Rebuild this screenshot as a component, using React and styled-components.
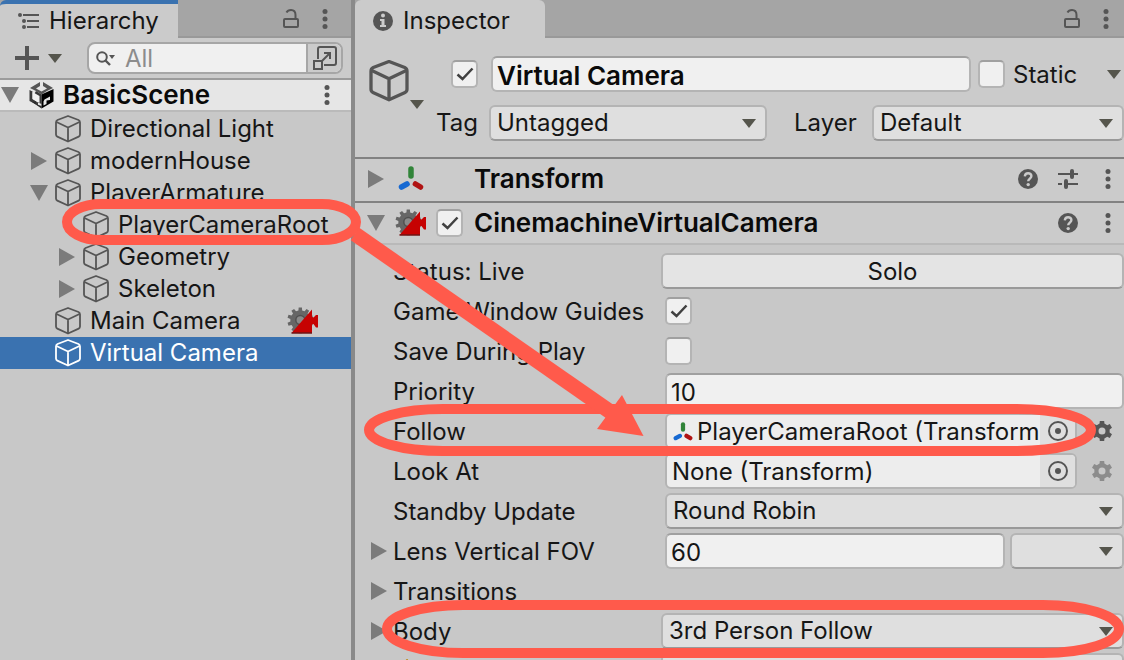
import React from "react";
import styled, { createGlobalStyle, css } from "styled-components";

const GlobalStyle = createGlobalStyle`
  *, *::before, *::after { box-sizing: border-box; }
  body {
    margin: 0;
    overflow: hidden;
    background: #c8c8c8;
    color: #161616;
    font-family: Inter, "Liberation Sans", sans-serif;
    font-size: 24px;
    line-height: 32px;
    font-optical-sizing: none;
  }
  button, input, select { font: inherit; color: inherit; }
  button { padding: 0; border: 0; background: none; cursor: pointer; }
  h1, h2, ul { margin: 0; padding: 0; font-size: inherit; font-weight: inherit; }
  svg { display: block; }
`;

/* ---------- icons ---------- */

const INK = "#555555";

function gearPath(cx, cy, outer, inner, teeth) {
  const step = (Math.PI * 2) / teeth;
  const points = [];
  for (let i = 0; i < teeth; i += 1) {
    const a = i * step - Math.PI / 2;
    [
      [-0.3, inner],
      [-0.2, outer],
      [0.2, outer],
      [0.3, inner],
    ].forEach(([offset, r]) => {
      const angle = a + offset * step;
      points.push(`${(cx + r * Math.cos(angle)).toFixed(2)} ${(cy + r * Math.sin(angle)).toFixed(2)}`);
    });
  }
  return `M${points.join("L")}Z`;
}

const TriangleRight = () => (
  <svg width="16" height="18" viewBox="0 0 16 18"><path d="M0 0L16 9L0 18Z" fill="#7b7b7b" /></svg>
);
const TriangleDown = () => (
  <svg width="18" height="16" viewBox="0 0 18 16"><path d="M0 0H18L9 16Z" fill="#7b7b7b" /></svg>
);
const Caret = () => (
  <svg width="14" height="9" viewBox="0 0 14 9"><path d="M0 0H14L7 9Z" fill="#55554c" /></svg>
);
const Dots = () => (
  <svg width="6" height="20" viewBox="0 0 6 20" fill={INK}>
    <circle cx="3" cy="2.5" r="2.5" /><circle cx="3" cy="10" r="2.5" /><circle cx="3" cy="17.5" r="2.5" />
  </svg>
);
const Lock = () => (
  <svg width="18" height="22" viewBox="0 0 18 22" fill="none" stroke={INK} strokeWidth="2">
    <rect x="2" y="11" width="14" height="8" rx="1" />
    <path d="M4.500 4.500C5.500 2.500 7 2 9 2C12 2 13.500 4 13.500 7V11" />
  </svg>
);
const ListIcon = () => (
  <svg width="22" height="18" viewBox="0 0 22 18" fill={INK}>
    <circle cx="2" cy="3" r="2" /><circle cx="6" cy="9" r="2" /><circle cx="6" cy="15" r="2" />
    <path d="M5 2H21V4H5ZM9 8H21V10H9ZM9 14H21V16H9Z" />
  </svg>
);
const InfoIcon = () => (
  <svg width="20" height="20" viewBox="0 0 20 20">
    <circle cx="10" cy="10" r="10" fill={INK} />
    <circle cx="10" cy="4.500" r="2" fill="#cbcbcb" />
    <path d="M7 8H11.500V14H13V16H7V14H8.500V10H7Z" fill="#cbcbcb" />
  </svg>
);
const HelpIcon = () => (
  <svg width="20" height="20" viewBox="0 0 20 20">
    <circle cx="10" cy="10" r="10" fill={INK} />
    <path d="M6.800 7.400C7 5.200 8.300 4.200 10.100 4.200C12 4.200 13.400 5.400 13.400 7.100C13.400 9.600 10.200 9.600 10.200 12.300" fill="none" stroke="#cbcbcb" strokeWidth="2.400" />
    <circle cx="10.200" cy="15.600" r="1.700" fill="#cbcbcb" />
  </svg>
);
const SlidersIcon = () => (
  <svg width="20" height="20" viewBox="0 0 20 20" fill={INK}>
    <path d="M0 4H12V6H0ZM16 4H20V6H16ZM0 14H4V16H0ZM10 14H20V16H10Z" />
    <rect x="12" y="0" width="4" height="10" rx="2" /><rect x="6" y="10" width="4" height="10" rx="2" />
  </svg>
);
const Cube = ({ size = 28, color = INK, weight = 1.8 }) => (
  <svg width={size} height={size} viewBox="0 0 28 28" fill="none" stroke={color} strokeWidth={weight} strokeLinejoin="round">
    <path d="M14 1L24.500 5Q26 5.700 26 7.500V19.500Q26 21 24.700 21.600L14 26.500L3.300 21.600Q2 21 2 19.500V7.500Q2 5.700 3.500 5Z" />
    <path d="M2.500 7L14 12.500L25.500 7M14 12.500V26.500" />
  </svg>
);
const UnityLogo = () => (
  <svg width="25" height="28" viewBox="0 0 25 28">
    <path d="M11 1L1 7L7 10L12.500 13.500L18 10L24 7L14 1V5L18 7.500L12.500 10.500L7 7.500L11 5Z" fill="#555555" />
    <path d="M0.500 9L3.500 10.500V18L9 21.500V16L5 13.500L7 10L12.500 13.500V23L9 21.500V24.500L0.500 20Z" fill="#3a3a3a" />
    <path d="M3.500 11L10.500 15V22L3.500 18Z" fill="#f2f2f2" />
    <path d="M3 21L7 20.500V23L12.500 25V27.500Z" fill="#2b2b2b" />
    <path d="M12.500 13.500L24.500 8V20.500L12.500 27.500Z" fill="#000000" />
    <path d="M14.500 20.500L15.500 18.500L21 15.500V19L17.500 19.500V23L14.500 24.500Z" fill="#e6e6e6" />
  </svg>
);
const AxesIcon = ({ size = 26 }) => (
  <svg width={size} height={size} viewBox="0 0 26 26" fill="none" strokeWidth="5.500" strokeLinecap="round">
    <path d="M13 3V10" stroke="#318439" />
    <path d="M3.500 21L9 18" stroke="#1769d2" />
    <path d="M17.500 18L22.500 21" stroke="#b01313" />
  </svg>
);
const CinemachineIcon = () => (
  <svg width="32" height="28" viewBox="0 0 32 28">
    <path d={gearPath(13.3, 13.3, 13, 10, 10)} fill="#666666" />
    <circle cx="13.300" cy="13" r="4.500" fill="#8a8a8a" stroke="#505050" strokeWidth="1.500" />
    <path d="M4.500 26L25 2.500V10L26.500 10.500L29 8H31V20.500H29L26.500 17L25 17.500V26Z" fill="#c60202" />
    <path d="M4.500 26H25" stroke="#6f1515" strokeWidth="1.500" />
  </svg>
);
const SettingsGear = ({ color = INK }) => (
  <svg width="20" height="20" viewBox="0 0 20 20">
    <path fillRule="evenodd" fill={color} d={`${gearPath(10, 10, 10.5, 7.8, 6)}M10 6.500A3.500 3.500 0 1 0 10 13.500A3.500 3.500 0 1 0 10 6.500Z`} />
  </svg>
);
const TargetIcon = () => (
  <svg width="20" height="20" viewBox="0 0 20 20">
    <circle cx="10" cy="10" r="9" fill="none" stroke={INK} strokeWidth="2" /><circle cx="10" cy="10" r="3" fill={INK} />
  </svg>
);
const SearchIcon = () => (
  <svg width="19" height="15" viewBox="0 0 19 15">
    <circle cx="6" cy="6" r="4.800" fill="none" stroke={INK} strokeWidth="2" />
    <path d="M9 9L14 14" stroke={INK} strokeWidth="2.400" /><path d="M13 4H19L16 8Z" fill={INK} />
  </svg>
);
const OpenWindowIcon = () => (
  <svg width="24" height="24" viewBox="0 0 24 24" fill="none" stroke={INK} strokeWidth="2">
    <path d="M5 13V3Q5 1 7 1H21Q23 1 23 3V17Q23 19 21 19H11" />
    <rect x="1" y="15" width="8" height="8" /><path d="M9 15L17 7M11 7H17V13" />
  </svg>
);
const PlusIcon = () => (
  <svg width="24" height="24" viewBox="0 0 24 24"><path d="M10 0H14V10H24V14H14V24H10V14H0V10H10Z" fill={INK} /></svg>
);
const WarningIcon = () => (
  <svg width="28" height="28" viewBox="0 0 28 28">
    <path d="M14 2L26 25H2Z" fill="#f5c32c" stroke="#c08a14" strokeWidth="2" strokeLinejoin="round" />
    <path d="M14 10V18M14 20V22" stroke="#333333" strokeWidth="2" />
  </svg>
);

/* ---------- panels ---------- */

const Editor = styled.div`
  position: relative;
  display: flex;
  height: 100vh;
  overflow: hidden;
`;
const HierarchyPanel = styled.section`
  flex: 0 0 351px;
  min-width: 0;
  background: #c8c8c8;
`;
const InspectorPanel = styled.section`
  flex: 1;
  min-width: 0;
  border-left: 4px solid #8a8a8a;
  background: #c8c8c8;
`;
const TabBar = styled.header`
  display: flex;
  justify-content: space-between;
  height: 38px;
  background: linear-gradient(#a5a5a5 36px, #999999 36px);
`;
const Tab = styled.h1`
  display: flex;
  align-items: center;
  gap: ${(p) => (p.$focused ? 9 : 10)}px;
  width: ${(p) => p.$width}px;
  padding: 3px 0 0 18px;
  border-radius: 6px 6px 0 0;
  background: #cbcbcb;
  ${(p) => p.$focused && css`
    padding-top: 0;
    border-top: 4px solid #3a72b0;
    border-radius: 6px 0 0 0;
  `}
`;
const TabTools = styled.div`
  display: flex;
  align-items: center;
  gap: 10px;
  padding-right: ${(p) => p.$end}px;
`;
const IconButton = styled.button`
  display: grid;
  place-items: center;
  width: 24px;
  height: 28px;
`;

/* ---------- hierarchy ---------- */

const Toolbar = styled.div`
  display: flex;
  align-items: center;
  height: 42px;
  padding: 0 8px 0 15px;
  border-bottom: 2px solid #9b9b9b;
  background: #cbcbcb;
`;
const AddButton = styled.button`
  display: flex;
  align-items: center;
  flex: 0 0 72px;
  gap: 9px;
`;
const SearchBox = styled.div`
  display: flex;
  align-items: center;
  flex: 1;
  min-width: 0;
  height: 32px;
  padding-left: 7px;
  overflow: hidden;
  border: 2px solid #a6a6a6;
  border-radius: 8px;
  background: #f0f0f0;
  svg { flex: none; }
`;
const SearchInput = styled.input`
  flex: 1;
  min-width: 0;
  width: 0;
  padding: 2px 10px 0;
  border: 0;
  outline: 0;
  background: none;
  &::placeholder { color: #8c8c8c; opacity: 1; }
`;
const SearchWindowButton = styled.button`
  display: grid;
  place-items: center;
  flex: 0 0 35px;
  height: 28px;
  border-left: 2px solid #a6a6a6;
  background: #cbcbcb;
`;
const SceneRow = styled.div`
  display: flex;
  align-items: center;
  height: 32px;
  padding-right: 12px;
  border-bottom: 2px solid #bababa;
  background: #e6e6e6;
`;
const SceneName = styled.h2`
  flex: 1;
  padding-left: 9px;
  color: #0a0a0a;
  font-size: 26px;
  font-weight: 600;
`;
const SceneLogo = styled.span`
  padding-left: 9px;
`;
const Tree = styled.ul`
  padding-top: 1px;
  list-style: none;
`;
const TreeRow = styled.li`
  display: flex;
  align-items: center;
  height: 32px;
  padding: 0 ${(p) => (p.$level > 1 ? 8 : 32)}px 0 ${(p) => p.$level * 28 - 4}px;
  ${(p) => p.$selected && css`
    background: #3a72b0;
    color: #ffffff;
  `}
`;
const Toggle = styled.button`
  display: grid;
  place-items: center;
  width: ${(p) => p.$width || 30}px;
  height: 28px;
  flex: none;
`;
const ToggleSpace = styled.span`
  flex: 0 0 30px;
`;
const TreeName = styled.button`
  display: flex;
  align-items: center;
  gap: 8px;
  flex: 1;
  text-align: left;
  white-space: nowrap;
`;
const TreeText = styled.span`
  padding-bottom: 1px;
`;

/* ---------- inspector ---------- */

const ObjectHeader = styled.div`
  display: grid;
  grid-template-columns: 68px minmax(0, 1fr);
  padding: 18px 0 16px 13px;
  background: #cbcbcb;
`;
const ObjectIconButton = styled.button`
  display: flex;
  align-items: flex-end;
  align-self: start;
  height: 53px;
  padding-top: 4px;
  svg:first-child { align-self: flex-start; }
`;
const HeaderRows = styled.div`
  display: grid;
  gap: 13px;
`;
const NameRow = styled.div`
  display: grid;
  grid-template-columns: 40px minmax(0, 1fr) 153px;
  align-items: center;
  padding-left: 15px;
`;
const StaticGroup = styled.div`
  display: flex;
  align-items: center;
  gap: 8px;
  padding: 0 3px 0 7px;
`;
const StaticLabel = styled.label`
  flex: 1;
  padding-top: 2px;
`;
const TagRow = styled.div`
  display: grid;
  grid-template-columns: 53px minmax(0, 278fr) 105px minmax(0, 252fr);
  align-items: center;
`;
const FieldLabel = styled.label`
  padding-left: ${(p) => p.$start || 0}px;
  white-space: nowrap;
`;
const PropertyLabel = styled(FieldLabel)`
  padding-top: 2px;
`;
const fieldBox = css`
  width: 100%;
  min-width: 0;
  height: 36px;
  border: 2px solid #b4b4b4;
  border-radius: 6px;
`;
const TextField = styled.input`
  ${fieldBox}
  padding: 2px 4px 0;
  border-top-color: #a0a0a0;
  outline: 0;
  background: #f0f0f0;
  ${(p) => p.$strong && css`
    color: #0a0a0a;
    font-size: 26px;
    font-weight: 600;
  `}
`;
const SelectWrap = styled.div`
  position: relative;
  min-width: 0;
`;
const SelectField = styled.select`
  ${fieldBox}
  display: block;
  padding: 0 30px 1px 6px;
  border-bottom-color: #999999;
  appearance: none;
  outline: 0;
  background: #dfdfdf;
`;
const SelectCaret = styled.span`
  position: absolute;
  top: 14px;
  right: 11px;
  pointer-events: none;
`;
const PushButton = styled.button`
  ${fieldBox}
  padding-top: 1px;
  border-bottom-color: #999999;
  background: #e4e4e4;
`;
const CheckWrap = styled.span`
  display: grid;
  place-items: center;
  width: 27px;
  height: 28px;
  flex: none;
  & > * { grid-area: 1 / 1; }
  svg { pointer-events: none; visibility: hidden; }
  input:checked + svg { visibility: visible; }
`;
const CheckInput = styled.input`
  width: 27px;
  height: 28px;
  margin: 0;
  appearance: none;
  border: 2px solid #b4b4b4;
  border-top-color: #a0a0a0;
  border-radius: 5px;
  background: #f0f0f0;
`;
const SectionHeader = styled.header`
  display: grid;
  grid-template-columns: 28px 41px 38px 1fr auto;
  align-items: center;
  height: 44px;
  padding: 0 4px 0 12px;
  border-top: 2px solid #828282;
  border-bottom: 2px solid ${(p) => (p.$open ? "#b9b9b9" : "#cbcbcb")};
  background: #cbcbcb;
`;
const SectionIcon = styled.span`
  display: grid;
  justify-content: start;
  padding-left: ${(p) => (p.$inset ? 3 : 0)}px;
`;
const SectionTitle = styled.h2`
  color: #0a0a0a;
  font-size: 26px;
  font-weight: 600;
`;
const SectionTools = styled.div`
  display: flex;
  gap: 16px;
`;
const Properties = styled.div`
  padding-top: 6px;
`;
const PropertyRow = styled.div`
  display: grid;
  grid-template-columns: 22px ${(p) => (p.$wide ? 268 : 272)}px minmax(0, 1fr);
  align-items: center;
  height: 40px;
  padding-left: 16px;
`;
const LensFields = styled.div`
  display: grid;
  grid-template-columns: minmax(0, 340fr) minmax(0, 114fr);
  gap: 5px;
`;
const ReferenceLine = styled.div`
  display: grid;
  grid-template-columns: minmax(0, 1fr) 47px;
  align-items: center;
`;
const ReferenceBox = styled.div`
  ${fieldBox}
  display: flex;
  overflow: hidden;
  background: #ededed;
`;
const ReferenceValue = styled.button`
  display: flex;
  align-items: center;
  gap: 4px;
  flex: 1;
  min-width: 0;
  padding: 2px 0 0 ${(p) => (p.$icon ? 6 : 5)}px;
  overflow: hidden;
  white-space: nowrap;
  text-align: left;
  svg { flex: none; }
`;
const PickerButton = styled.button`
  display: grid;
  place-items: center;
  flex: 0 0 35px;
  background: #dfdfdf;
`;
const GearButton = styled.button`
  justify-self: start;
  padding-left: 15px;
`;
const Annotations = styled.svg`
  position: absolute;
  top: 0;
  left: 0;
  pointer-events: none;
`;

function Check({ id, checked, label }) {
  return (
    <CheckWrap>
      <CheckInput type="checkbox" id={id} aria-label={label} defaultChecked={checked} />
      <svg width="18" height="16" viewBox="0 0 18 16"><path d="M1.500 8.500L6.500 13L16.500 2.500" fill="none" stroke="#404040" strokeWidth="2.500" /></svg>
    </CheckWrap>
  );
}

function Select({ id, value, label }) {
  return (
    <SelectWrap>
      <SelectField id={id} aria-label={label} defaultValue={value}>
        <option value={value}>{value}</option>
      </SelectField>
      <SelectCaret><Caret /></SelectCaret>
    </SelectWrap>
  );
}

function Property({ id, label, foldout, wide, children }) {
  return (
    <PropertyRow $wide={wide}>
      {foldout ? <Toggle $width={16} aria-label={`Expand ${label}`}><TriangleRight /></Toggle> : <span />}
      <PropertyLabel htmlFor={id}>{label}</PropertyLabel>
      {children}
    </PropertyRow>
  );
}

function Reference({ id, icon, value, gearColor }) {
  return (
    <ReferenceLine>
      <ReferenceBox>
        <ReferenceValue id={id} $icon={Boolean(icon)}>{icon}{value}</ReferenceValue>
        <PickerButton aria-label="Pick object"><TargetIcon /></PickerButton>
      </ReferenceBox>
      <GearButton aria-label="Options"><SettingsGear color={gearColor} /></GearButton>
    </ReferenceLine>
  );
}

const NODES = [
  { name: "Directional Light", level: 1 },
  { name: "modernHouse", level: 1, state: "closed" },
  { name: "PlayerArmature", level: 1, state: "open" },
  { name: "PlayerCameraRoot", level: 2 },
  { name: "Geometry", level: 2, state: "closed" },
  { name: "Skeleton", level: 2, state: "closed" },
  { name: "Main Camera", level: 1, brain: true },
  { name: "Virtual Camera", level: 1, selected: true },
];

function Hierarchy() {
  return (
    <HierarchyPanel>
      <TabBar>
        <Tab $width={178} $focused><ListIcon />Hierarchy</Tab>
        <TabTools $end={14}>
          <IconButton aria-label="Lock"><Lock /></IconButton>
          <IconButton aria-label="Menu"><Dots /></IconButton>
        </TabTools>
      </TabBar>
      <Toolbar>
        <AddButton aria-label="Create"><PlusIcon /><Caret /></AddButton>
        <SearchBox>
          <SearchIcon />
          <SearchInput placeholder="All" aria-label="Search hierarchy" />
          <SearchWindowButton aria-label="Open search window"><OpenWindowIcon /></SearchWindowButton>
        </SearchBox>
      </Toolbar>
      <SceneRow>
        <Toggle $width={20} aria-label="Collapse BasicScene"><TriangleDown /></Toggle>
        <SceneLogo><UnityLogo /></SceneLogo>
        <SceneName>BasicScene</SceneName>
        <IconButton aria-label="Scene menu"><Dots /></IconButton>
      </SceneRow>
      <Tree>
        {NODES.map((n) => (
          <TreeRow key={n.name} $level={n.level} $selected={n.selected}>
            {n.state ? (
              <Toggle aria-label={`Toggle ${n.name}`}>{n.state === "open" ? <TriangleDown /> : <TriangleRight />}</Toggle>
            ) : (
              <ToggleSpace />
            )}
            <TreeName>
              <Cube color={n.selected ? "#ffffff" : INK} />
              <TreeText>{n.name}</TreeText>
            </TreeName>
            {n.brain && <CinemachineIcon />}
          </TreeRow>
        ))}
      </Tree>
    </HierarchyPanel>
  );
}

function Inspector() {
  return (
    <InspectorPanel>
      <TabBar>
        <Tab $width={190}><InfoIcon />Inspector</Tab>
        <TabTools $end={6}>
          <IconButton aria-label="Lock"><Lock /></IconButton>
          <IconButton aria-label="Menu"><Dots /></IconButton>
        </TabTools>
      </TabBar>
      <ObjectHeader>
        <ObjectIconButton aria-label="Choose icon"><Cube size={42} weight={2.2} /><Caret /></ObjectIconButton>
        <HeaderRows>
          <NameRow>
            <Check label="Active" checked />
            <TextField aria-label="Name" defaultValue="Virtual Camera" $strong />
            <StaticGroup>
              <Check id="static" />
              <StaticLabel htmlFor="static">Static</StaticLabel>
              <button aria-label="Static options"><Caret /></button>
            </StaticGroup>
          </NameRow>
          <TagRow>
            <FieldLabel htmlFor="tag">Tag</FieldLabel>
            <Select id="tag" value="Untagged" />
            <FieldLabel htmlFor="layer" $start={27}>Layer</FieldLabel>
            <Select id="layer" value="Default" />
          </TagRow>
        </HeaderRows>
      </ObjectHeader>
      <SectionHeader>
        <Toggle $width={18} aria-label="Expand Transform"><TriangleRight /></Toggle>
        <SectionIcon $inset><AxesIcon /></SectionIcon>
        <span />
        <SectionTitle>Transform</SectionTitle>
        <SectionTools>
          <IconButton aria-label="Help"><HelpIcon /></IconButton>
          <IconButton aria-label="Presets"><SlidersIcon /></IconButton>
          <IconButton aria-label="Menu"><Dots /></IconButton>
        </SectionTools>
      </SectionHeader>
      <SectionHeader $open>
        <Toggle $width={18} aria-label="Collapse CinemachineVirtualCamera"><TriangleDown /></Toggle>
        <SectionIcon><CinemachineIcon /></SectionIcon>
        <Check label="Enable CinemachineVirtualCamera" checked />
        <SectionTitle>CinemachineVirtualCamera</SectionTitle>
        <SectionTools>
          <IconButton aria-label="Help"><HelpIcon /></IconButton>
          <IconButton aria-label="Menu"><Dots /></IconButton>
        </SectionTools>
      </SectionHeader>
      <Properties>
        <Property id="solo" label="Status: Live" wide><PushButton id="solo">Solo</PushButton></Property>
        <Property id="guides" label="Game Window Guides"><Check id="guides" checked /></Property>
        <Property id="save" label="Save During Play"><Check id="save" /></Property>
        <Property id="priority" label="Priority"><TextField id="priority" defaultValue="10" /></Property>
        <Property id="follow" label="Follow">
          <Reference id="follow" icon={<AxesIcon size={20} />} value="PlayerCameraRoot (Transform" />
        </Property>
        <Property id="look" label="Look At">
          <Reference id="look" value="None (Transform)" gearColor="#8c8c8c" />
        </Property>
        <Property id="standby" label="Standby Update"><Select id="standby" value="Round Robin" /></Property>
        <Property id="lens" label="Lens Vertical FOV" foldout>
          <LensFields>
            <TextField id="lens" defaultValue="60" />
            <Select label="Lens preset" value="" />
          </LensFields>
        </Property>
        <Property label="Transitions" foldout />
        <Property id="body" label="Body" foldout wide><Select id="body" value="3rd Person Follow" /></Property>
        <Property label={<WarningIcon />} wide><Select label="Follow settings" value="" /></Property>
      </Properties>
    </InspectorPanel>
  );
}

export default function App() {
  return (
    <>
      <GlobalStyle />
      <Editor>
        <Hierarchy />
        <Inspector />
        <Annotations width="1124" height="660" viewBox="0 0 1124 660" aria-hidden="true">
          <g fill="none" stroke="#ff5a4b" strokeWidth="10">
            <rect x="67" y="204" width="289" height="36" rx="34" ry="18" />
            <rect x="369" y="409" width="722" height="42" rx="74" ry="21" />
            <rect x="387" y="605" width="732" height="48" rx="76" ry="24" />
            <path d="M355 234L612 413" strokeWidth="15" />
          </g>
          <path d="M643.500 436L622 395L597 429Z" fill="#ff5a4b" />
        </Annotations>
      </Editor>
    </>
  );
}
